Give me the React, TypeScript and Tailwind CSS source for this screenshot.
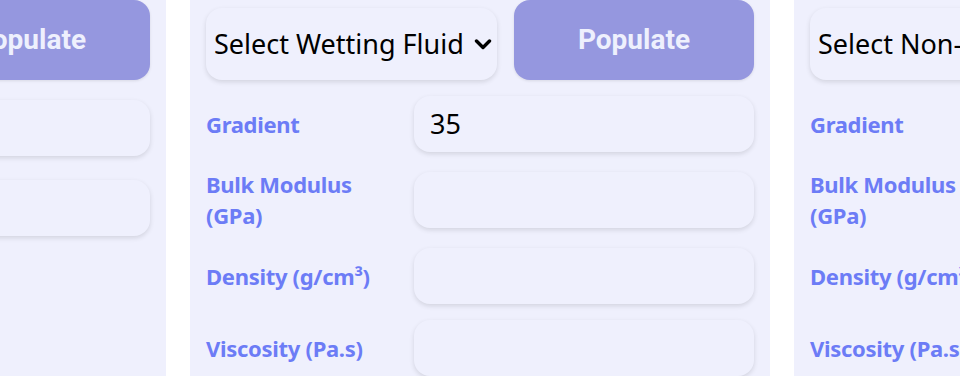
import { ReactNode } from "react";

const labelFont = { fontFamily: "'Noto Sans', 'Open Sans', sans-serif" };

function Chevron() {
  return (
    <svg width="18" height="11" viewBox="0 0 18 11" fill="none" stroke="black" strokeWidth="3.4" strokeLinecap="round" strokeLinejoin="round">
      <path d="M2.5 2L9 8.5L15.5 2" />
    </svg>
  );
}

function Field({ label, value, className }: { label: ReactNode; value?: string; className: string }) {
  return (
    <div className={`flex items-center h-14 ${className}`}>
      <div className="w-[208px] text-[22px] leading-[31px] font-bold text-[#6c7cf6] tracking-[-0.3px]">{label}</div>
      <div className="w-[340px] h-14 rounded-2xl bg-[#eff0fd] shadow-[0_2px_5px_rgba(0,0,0,0.12)] flex items-center px-4 text-[27px] text-black">
        {value}
      </div>
    </div>
  );
}

function TopRow({ title }: { title: string }) {
  return (
    <div className="flex items-start gap-[17px]">
      <div className="mt-2 w-[291px] h-[72px] shrink-0 rounded-2xl bg-[#eff0fd] shadow-[0_2px_5px_rgba(0,0,0,0.12)] flex items-center gap-[10px] pl-2 text-[27px] text-black whitespace-nowrap overflow-hidden">
        <span>{title}</span>
        <Chevron />
      </div>
      <button
        className="w-[240px] h-20 rounded-2xl bg-[#9597df] text-[#eef0fd] text-[28px] font-bold shadow-[0_1px_3px_rgba(0,0,0,0.1)]"
        style={{ fontFamily: "Roboto, 'Liberation Sans', sans-serif" }}
      >
        Populate
      </button>
    </div>
  );
}

function FluidPanel({ title, gradient }: { title: string; gradient?: string }) {
  return (
    <div className="w-[580px] shrink-0 h-[376px] bg-[#eff0fd] px-4" style={labelFont}>
      <TopRow title={title} />
      <Field label="Gradient" value={gradient} className="mt-4" />
      <Field
        label={
          <>
            Bulk Modulus
            <br />
            (GPa)
          </>
        }
        className="mt-5"
      />
      <Field label="Density (g/cm³)" className="mt-5" />
      <Field label="Viscosity (Pa.s)" className="mt-4" />
    </div>
  );
}

function RockPanel() {
  return (
    <div className="w-[580px] shrink-0 h-[376px] bg-[#eff0fd] px-4 ml-[-414px]" style={labelFont}>
      <TopRow title="Select Rock" />
      <Field label="Porosity" className="mt-5" />
      <Field label="Permeability" className="mt-6" />
    </div>
  );
}

export default function App() {
  return (
    <div className="w-[960px] h-[376px] bg-white flex gap-6 overflow-hidden">
      <RockPanel />
      <FluidPanel title="Select Wetting Fluid" gradient="35" />
      <FluidPanel title="Select Non-Wetting Fluid" />
    </div>
  );
}
